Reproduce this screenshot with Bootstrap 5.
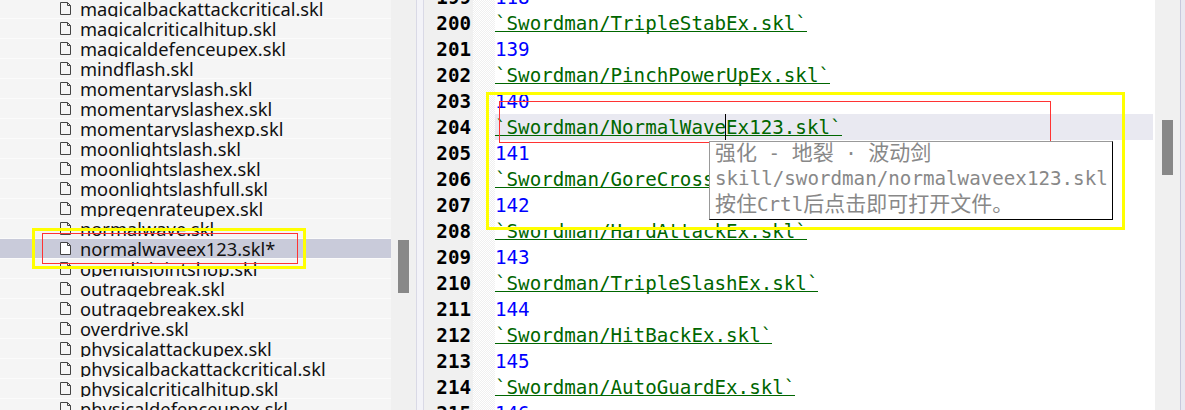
<!DOCTYPE html>
<html lang="zh"><head><meta charset="utf-8"><title>Editor</title>
<link href="https://cdn.jsdelivr.net/npm/bootstrap@5.3.0/dist/css/bootstrap.min.css" rel="stylesheet">
<style>
html,body{height:410px;overflow:hidden;background:#fff}
.stage{height:410px;width:1185px;position:relative;overflow:hidden}
.tree{width:391px;background:#f5f5f5;margin-top:-1px;flex:none}
.frow{height:20px;overflow:hidden;border-bottom:1px solid #fbfbfb;padding-left:60px;gap:8px;color:#111}
.frow span{display:block;height:18px;overflow:hidden;font:18.3px/20px "Noto Sans","Noto Sans CJK SC",sans-serif}
.frow svg{flex:none;margin-top:3px}
.frow.sel{background:#c9cbda}
.frow.sel svg path:first-child{fill:#fff}
.sb{width:25px;background:#f0f0f0;flex:none}
.sb i{display:block;width:11px;height:53px;background:#888;margin:240px 0 0 7px}
.edge{width:8px;flex:none;background:#f3f3f8;border-left:1px solid #d9d9e6;border-right:1px solid #d9d9e6}
.gut{width:49px;background:#f0f0f0;flex:none;text-align:right;padding-right:2px;font-weight:700;color:#000}
.fold{width:22px;flex:none;background-color:#f6f6f6;background-image:repeating-conic-gradient(#fff 0 25%,#f0f0f0 0 50%);background-size:2px 2px}
.code,.gut{font-family:"DejaVu Sans Mono","Liberation Mono",monospace;font-size:19.2px;margin-top:-16px}
.code{flex:1 1 auto;min-width:0}
.ln{height:26px;line-height:28px;white-space:nowrap}
.num{color:#00f;font-weight:500}
.lnk{color:#060;display:block;width:fit-content;height:22px;border-bottom:1px solid #060}
.cur{background:#e9e9f1}
.caret{position:absolute;left:725px;top:114px;width:1px;height:26px;background:#000}
.vbar{width:25px;flex:none;margin-left:2px;background:#f0f0f0}
.vbar i{display:block;width:11px;height:55px;background:#888;margin:120px 0 0 7px}
.vedge{width:5px;flex:none;background:#e9e9f1;border-left:1px solid #c8c8dc}
.hl-y{position:absolute;border:3px solid #ff0}
.hl-r{position:absolute;box-shadow:inset 0 0 0 1px #f33}
.y1{left:32px;top:228px;width:274px;height:41px}
.r1{left:42px;top:233px;width:256px;height:31px}
.y2{left:486px;top:92px;width:639px;height:138px}
.r2{left:499px;top:101px;width:552px;height:42px}
.tip{position:absolute;left:709px;top:141px;width:404px;height:79px;background:#fff;border:1px solid #999;border-right:1px solid #000;border-bottom:1px solid #000;padding-left:5px;color:#888;font:19.2px/25px "DejaVu Sans Mono","Noto Sans CJK SC",monospace;white-space:nowrap}
.tip div{height:25.5px}
.tip div:first-child{margin-top:-3px}
.tip div:nth-child(2){line-height:28px}
.tip b{font-family:"Noto Sans CJK SC",sans-serif;font-weight:400;font-size:21px}
</style></head><body>
<div class="stage d-flex">
<div class="tree" id="t"></div>
<div class="sb"><i></i></div>
<div class="edge"></div>
<div class="gut" id="g"></div>
<div class="fold"></div>
<div class="code" id="c"></div>
<div class="vbar"><i></i></div>
<div class="vedge"></div>
<div class="caret"></div>
<div class="hl-y y1"></div>
<div class="hl-r r1"></div>
<div class="hl-y y2"></div>
<div class="hl-r r2"></div>
<div class="tip"><div><b>强化</b> - <b>地裂</b> · <b>波动剑</b></div><div>skill/swordman/normalwaveex123.skl</div><div><b>按住</b>Crtl<b>后点击即可打开文件。</b></div></div>
</div>
<script>
var files="magicalbackattackcritical.skl magicalcriticalhitup.skl magicaldefenceupex.skl mindflash.skl momentaryslash.skl momentaryslashex.skl momentaryslashexp.skl moonlightslash.skl moonlightslashex.skl moonlightslashfull.skl mpregenrateupex.skl normalwave.skl normalwaveex123.skl* opendisjointshop.skl outragebreak.skl outragebreakex.skl overdrive.skl physicalattackupex.skl physicalbackattackcritical.skl physicalcriticalhitup.skl physicaldefenceupex.skl".split(" ");
var ic='<svg width="12" height="14" viewBox="0 0 12 14" fill="none" stroke="#444"><path d="M.5 .5H7.5L10.5 3.5V12.5H.5Z"/><path d="M7.5 .5V3.5H10.5"/></svg>';
document.getElementById("t").innerHTML=files.map(function(f){return '<div class="frow d-flex'+(f.endsWith("*")?" sel":"")+'">'+ic+'<span>'+f+'</span></div>'}).join("");
var l=[[199,"118"],[200,"TripleStabEx"],[201,"139"],[202,"PinchPowerUpEx"],[203,"140"],[204,"NormalWaveEx123"],[205,"141"],[206,"GoreCrossEx"],[207,"142"],[208,"HardAttackEx"],[209,"143"],[210,"TripleSlashEx"],[211,"144"],[212,"HitBackEx"],[213,"145"],[214,"AutoGuardEx"],[215,"146"]];
document.getElementById("g").innerHTML=l.map(function(x){return '<div class="ln">'+x[0]+'</div>'}).join("");
document.getElementById("c").innerHTML=l.map(function(x){var n=/^\d/.test(x[1]);return '<div class="ln'+(x[0]==204?" cur":"")+'">'+(n?'<span class="num">'+x[1]+'</span>':'<span class="lnk">`Swordman/'+x[1]+'.skl`</span>')+'</div>'}).join("");
</script>
<script src="https://cdn.jsdelivr.net/npm/bootstrap@5.3.0/dist/js/bootstrap.bundle.min.js"></script>
</body></html>
